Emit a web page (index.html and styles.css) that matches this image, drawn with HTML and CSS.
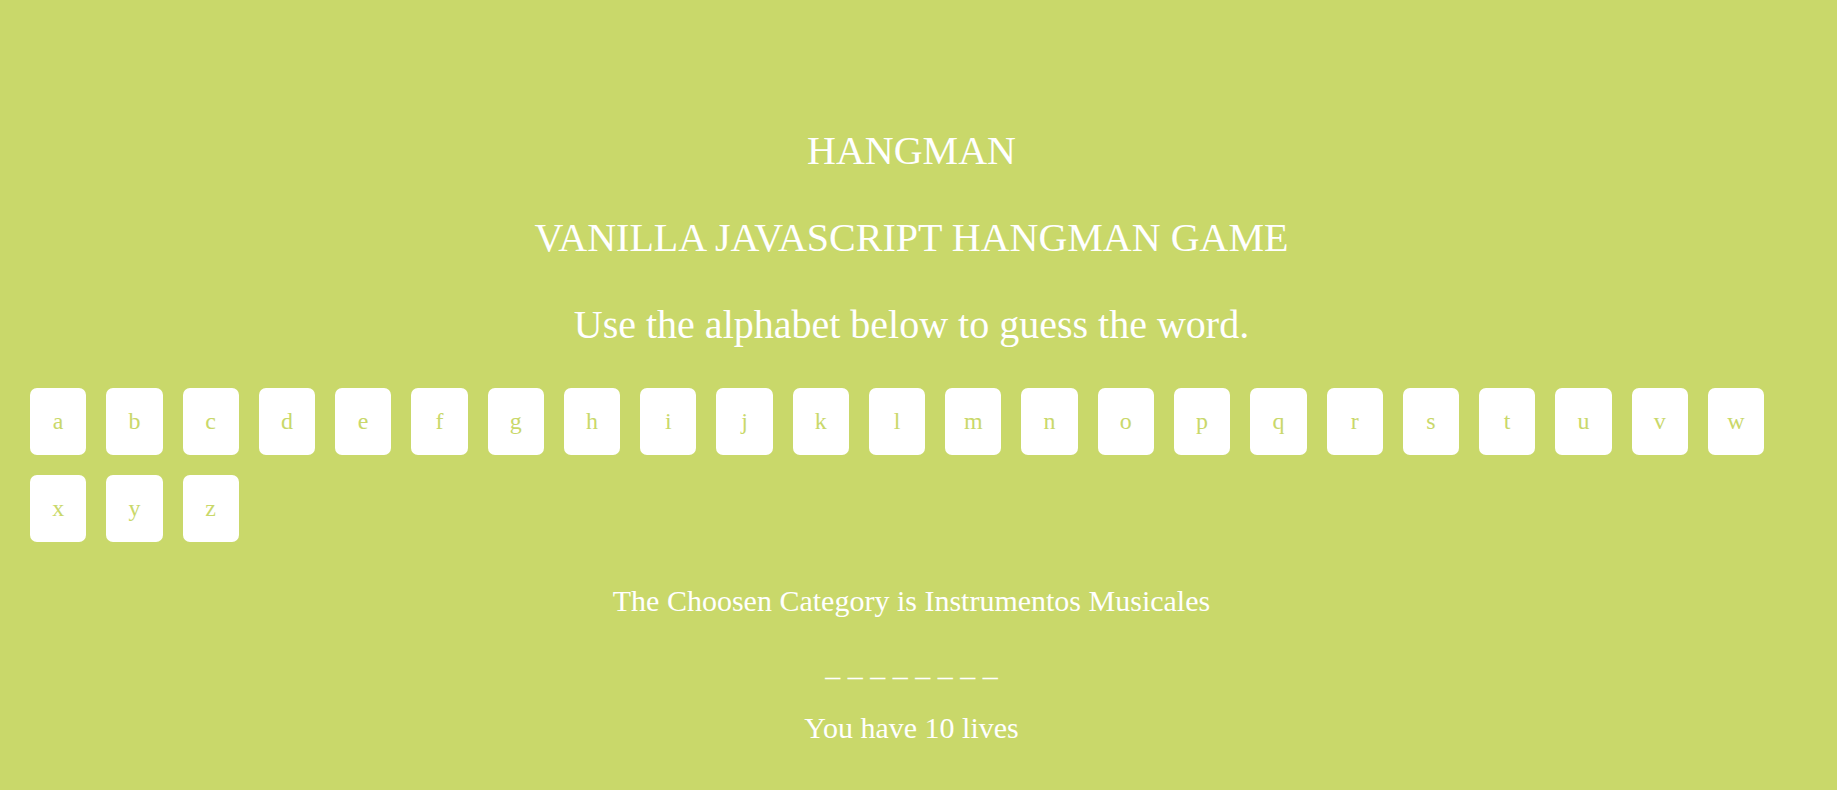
FILE: index.html
```html
<!DOCTYPE html>
<html>
<head>
<meta charset="utf-8">
<title>Hangman</title>
<link rel="stylesheet" href="styles.css">
</head>
<body>
<div class="wrapper">
  <h1 class="title">HANGMAN</h1>
  <h2 class="title">VANILLA JAVASCRIPT HANGMAN GAME</h2>
  <p class="title">Use the alphabet below to guess the word.</p>
  <ul class="alphabet">
    <li>a</li><li>b</li><li>c</li><li>d</li><li>e</li><li>f</li><li>g</li><li>h</li><li>i</li><li>j</li><li>k</li><li>l</li><li>m</li><li>n</li><li>o</li><li>p</li><li>q</li><li>r</li><li>s</li><li>t</li><li>u</li><li>v</li><li>w</li><li>x</li><li>y</li><li>z</li>
  </ul>
  <p class="category">The Choosen Category is Instrumentos Musicales</p>
  <p class="word">_ _ _ _ _ _ _ _</p>
  <p class="lives">You have 10 lives</p>
</div>
</body>
</html>
```
FILE: styles.css
```css
html, body {
  margin: 0;
  padding: 0;
}
body {
  background: #c9d86a;
  color: #ffffff;
  font-family: "Liberation Serif", "Times New Roman", serif;
  overflow: hidden;
}
.wrapper {
  padding: 128px 14px 0 0;
  text-align: center;
}
.title {
  margin: 0 0 41px;
  font-size: 40px;
  font-weight: normal;
  line-height: 46px;
}
.alphabet {
  list-style: none;
  margin: -1px 0 0;
  padding: 0 0 0 30px;
  display: flex;
  flex-wrap: wrap;
  column-gap: 20px;
  row-gap: 20px;
  width: 1780px;
}
.alphabet li {
  width: 56.27px;
  height: 67px;
  background: #ffffff;
  color: #c9d86a;
  border-radius: 7px;
  font-size: 24px;
  display: flex;
  align-items: center;
  justify-content: center;
}
.category, .word, .lives {
  margin: 0;
  font-size: 30px;
  line-height: 35px;
}
.category { margin-top: 40.5px; }
.word { margin-top: 30px; }
.lives { margin-top: 27px; }
```
